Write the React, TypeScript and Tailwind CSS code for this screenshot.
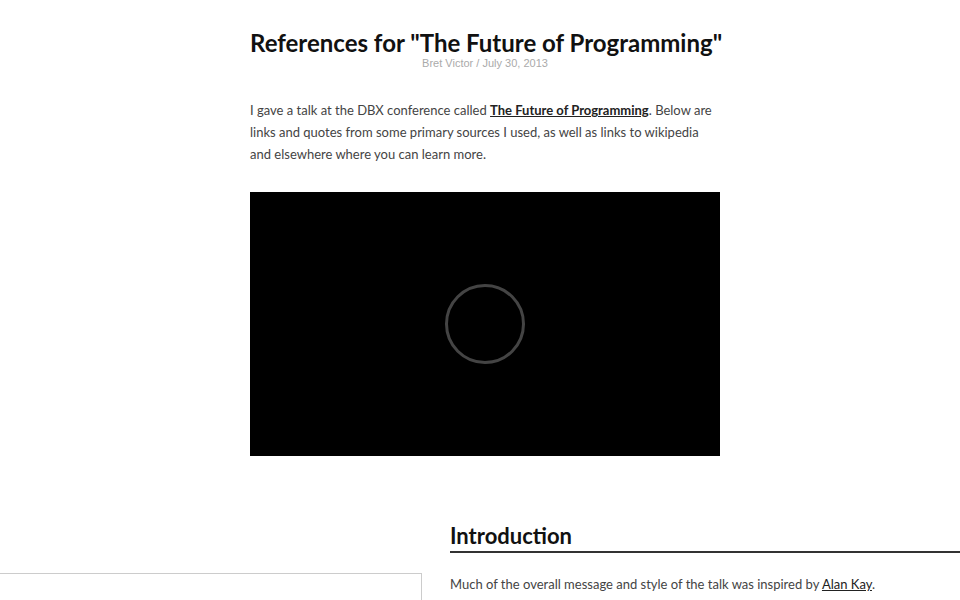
import React from "react";

const sans = { fontFamily: 'Lato, "Open Sans", sans-serif' };

export default function App() {
  return (
    <div className="h-[600px] bg-white overflow-hidden" style={sans}>
      <div className="ml-[250px] w-[470px] pt-[29px]">
        <h1 className="text-center whitespace-nowrap text-[24px] leading-[28px] font-bold text-[#111]">
          References for "The Future of Programming"
        </h1>
        <div className="text-center text-[11px] leading-[13px] text-[#aaa]" style={{ fontFamily: '"Liberation Sans", Arial, sans-serif' }}>
          Bret Victor / July 30, 2013
        </div>

        <p className="mt-[29px] text-[13px] leading-[22px] text-[#444]">
          I gave a talk at the DBX conference called{" "}
          <a href="#" className="font-bold text-[#222] underline">The Future of Programming</a>. Below are links and quotes from some primary sources I used, as well as links to wikipedia and elsewhere where you can learn more.
        </p>

        <div className="mt-[27px] h-[264px] bg-black flex items-center justify-center">
          <div className="w-[80px] h-[80px] rounded-full border-[3px] border-[#444]" />
        </div>
      </div>

      <div className="flex mt-[68px]">
        <div className="w-[422px] shrink-0 pt-[49px]">
          <div className="h-[60px] border border-[#ccc] border-l-0" />
        </div>
        <div className="ml-[28px] flex-1">
          <h2 className="text-[22px] leading-[24px] font-bold text-[#111] pb-[3px] border-b-2 border-[#333]">Introduction</h2>
          <p className="mt-[20px] text-[13px] leading-[22px] text-[#444]">
            Much of the overall message and style of the talk was inspired by{" "}
            <a href="#" className="text-[#222] underline">Alan Kay</a>.
          </p>
        </div>
      </div>
    </div>
  );
}
